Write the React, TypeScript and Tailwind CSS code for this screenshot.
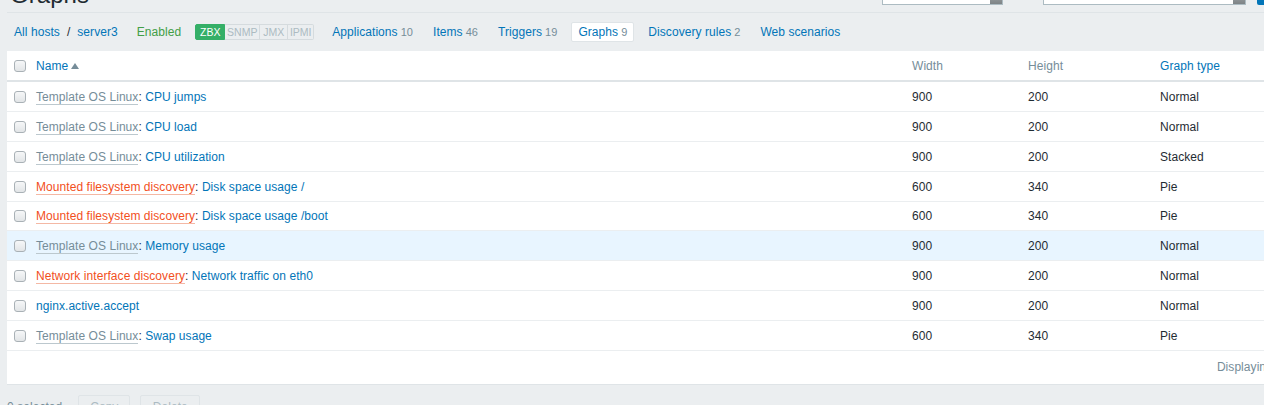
import React from "react";

type Row = {
  prefix?: string;
  kind?: "tpl" | "disc";
  name: string;
  w: number;
  h: number;
  t: string;
  hover?: boolean;
};

const rows: Row[] = [
  { prefix: "Template OS Linux", kind: "tpl", name: "CPU jumps", w: 900, h: 200, t: "Normal" },
  { prefix: "Template OS Linux", kind: "tpl", name: "CPU load", w: 900, h: 200, t: "Normal" },
  { prefix: "Template OS Linux", kind: "tpl", name: "CPU utilization", w: 900, h: 200, t: "Stacked" },
  { prefix: "Mounted filesystem discovery", kind: "disc", name: "Disk space usage /", w: 600, h: 340, t: "Pie" },
  { prefix: "Mounted filesystem discovery", kind: "disc", name: "Disk space usage /boot", w: 600, h: 340, t: "Pie" },
  { prefix: "Template OS Linux", kind: "tpl", name: "Memory usage", w: 900, h: 200, t: "Normal", hover: true },
  { prefix: "Network interface discovery", kind: "disc", name: "Network traffic on eth0", w: 900, h: 200, t: "Normal" },
  { name: "nginx.active.accept", w: 900, h: 200, t: "Normal" },
  { prefix: "Template OS Linux", kind: "tpl", name: "Swap usage", w: 600, h: 340, t: "Pie" },
];

function Checkbox() {
  return (
    <span className="block w-[12px] h-[12px] rounded-[3px] border border-[#a9b1b6] bg-gradient-to-b from-[#f6f7f8] to-[#e2e5e7]" />
  );
}

function Tab({ label, count, active }: { label: string; count?: number; active?: boolean }) {
  return (
    <div
      className={
        active
          ? "h-[20px] px-[6px] flex items-center bg-white border border-[#dfe4e7] rounded-[2px]"
          : "h-[20px] px-[5px] flex items-center border border-transparent"
      }
    >
      <span className="text-[#0275b8]">{label}</span>
      {count !== undefined && <span className="ml-[3px] text-[11px] text-[#768d99]">{count}</span>}
    </div>
  );
}

export default function App() {
  return (
    <div className="w-[1264px] h-[405px] overflow-hidden bg-[#ebeef0] font-['Liberation_Sans',Arial,sans-serif] text-[12px] tracking-[0.06px] text-[#1f2c33]">
      <div className="w-[1400px] pl-[7px]">
        {/* page header (cut off at top) */}
        <div className="h-[13px] border-b border-[#dfe4e7] flex items-start">
          <div className="w-[875px] h-[12px]">
            <h1 className="-mt-[17px] ml-[3px] text-[24px] leading-[24px] font-normal text-[#1f2c33]">Graphs</h1>
          </div>
          <div className="-mt-[20px] w-[121px] h-[25px] border border-[#acbbc2] bg-white flex justify-end">
            <span className="w-[12px] h-full bg-gradient-to-b from-[#d0d4d6] to-[#7d8386]" />
          </div>
          <div className="-mt-[20px] ml-[40px] w-[203px] h-[25px] border border-[#acbbc2] bg-white flex justify-end">
            <span className="w-[12px] h-full bg-gradient-to-b from-[#d0d4d6] to-[#7d8386]" />
          </div>
          <div className="-mt-[20px] ml-[11px] w-[80px] h-[25px] bg-[#0275b8] rounded-[2px]" />
        </div>

        {/* navigation */}
        <div className="mt-[8px] h-[22px] flex items-center pl-[7px]">
          <span className="text-[#0275b8]">All hosts</span>
          <span className="mx-[7px] text-[#1f2c33]">/</span>
          <span className="text-[#0275b8]">server3</span>
          <span className="ml-[19px] text-[#429e47]">Enabled</span>
          <div className="ml-[14px] flex h-[16px] text-[10.5px] leading-[14px] tracking-normal">
            <span className="w-[30px] flex items-center justify-center bg-[#34af67] border border-[#34af67] text-white rounded-l-[2px]">ZBX</span>
            <span className="w-[35px] flex items-center justify-center border border-l-0 border-[#d5dbde] text-[#acbbc2]">SNMP</span>
            <span className="w-[28px] flex items-center justify-center border border-l-0 border-[#d5dbde] text-[#acbbc2]">JMX</span>
            <span className="w-[26px] flex items-center justify-center border border-l-0 border-[#d5dbde] text-[#acbbc2] rounded-r-[2px]">IPMI</span>
          </div>
          <div className="ml-[12px] flex items-center gap-[8px]">
            <Tab label="Applications" count={10} />
            <Tab label="Items" count={46} />
            <Tab label="Triggers" count={19} />
            <Tab label="Graphs" count={9} active />
            <Tab label="Discovery rules" count={2} />
            <Tab label="Web scenarios" />
          </div>
        </div>

        {/* table */}
        <div className="mt-[8px] w-[1367px] bg-white border-b border-[#dfe4e7]">
          <div className="grid grid-cols-[24px_876px_116px_132px_1fr] h-[31px] pt-[1px] items-center border-b-2 border-[#dfe4e7]">
            <div className="pl-[7px]"><Checkbox /></div>
            <div className="pl-[5px] flex items-center">
              <span className="text-[#0275b8]">Name</span>
              <svg width="8" height="6" viewBox="0 0 8 6" className="ml-[3px]">
                <path d="M0 6 L4 0 L8 6 Z" fill="#768d99" />
              </svg>
            </div>
            <div className="pl-[5px] text-[#768d99]">Width</div>
            <div className="pl-[5px] text-[#768d99]">Height</div>
            <div className="pl-[5px] text-[#0275b8]">Graph type</div>
          </div>
          {rows.map((r, i) => (
            <div
              key={i}
              className={
                "grid grid-cols-[24px_876px_116px_132px_1fr] h-[29.875px] pt-[1px] items-center border-b border-[#ebeef0] " +
                (r.hover ? "bg-[#e8f5ff]" : "")
              }
            >
              <div className="pl-[7px]"><Checkbox /></div>
              <div className="pl-[5px] whitespace-nowrap">
                {r.prefix && (
                  <>
                    <span
                      className={
                        r.kind === "disc"
                          ? "text-[#f24f1d] border-b border-[#f4b8a4]"
                          : "text-[#768d99] border-b border-[#bcc8ce]"
                      }
                    >
                      {r.prefix}
                    </span>
                    <span>: </span>
                  </>
                )}
                <span className="text-[#0275b8]">{r.name}</span>
              </div>
              <div className="pl-[5px]">{r.w}</div>
              <div className="pl-[5px]">{r.h}</div>
              <div className="pl-[5px]">{r.t}</div>
            </div>
          ))}
          <div className="h-[33px] flex items-center justify-end pr-[10px] text-[#768d99]">
            Displaying 1 to 9 of 9 found
          </div>
        </div>

        {/* actions */}
        <div className="mt-[10px] flex items-center h-[24px]">
          <span className="text-[#768d99]">0 selected</span>
          <button className="ml-[16px] w-[52px] h-[24px] border border-[#dfe4e7] rounded-[2px] bg-[#ebeef0] text-[#acbbc2]">Copy</button>
          <button className="ml-[10px] w-[60px] h-[24px] border border-[#dfe4e7] rounded-[2px] bg-[#ebeef0] text-[#acbbc2]">Delete</button>
        </div>
      </div>
    </div>
  );
}
